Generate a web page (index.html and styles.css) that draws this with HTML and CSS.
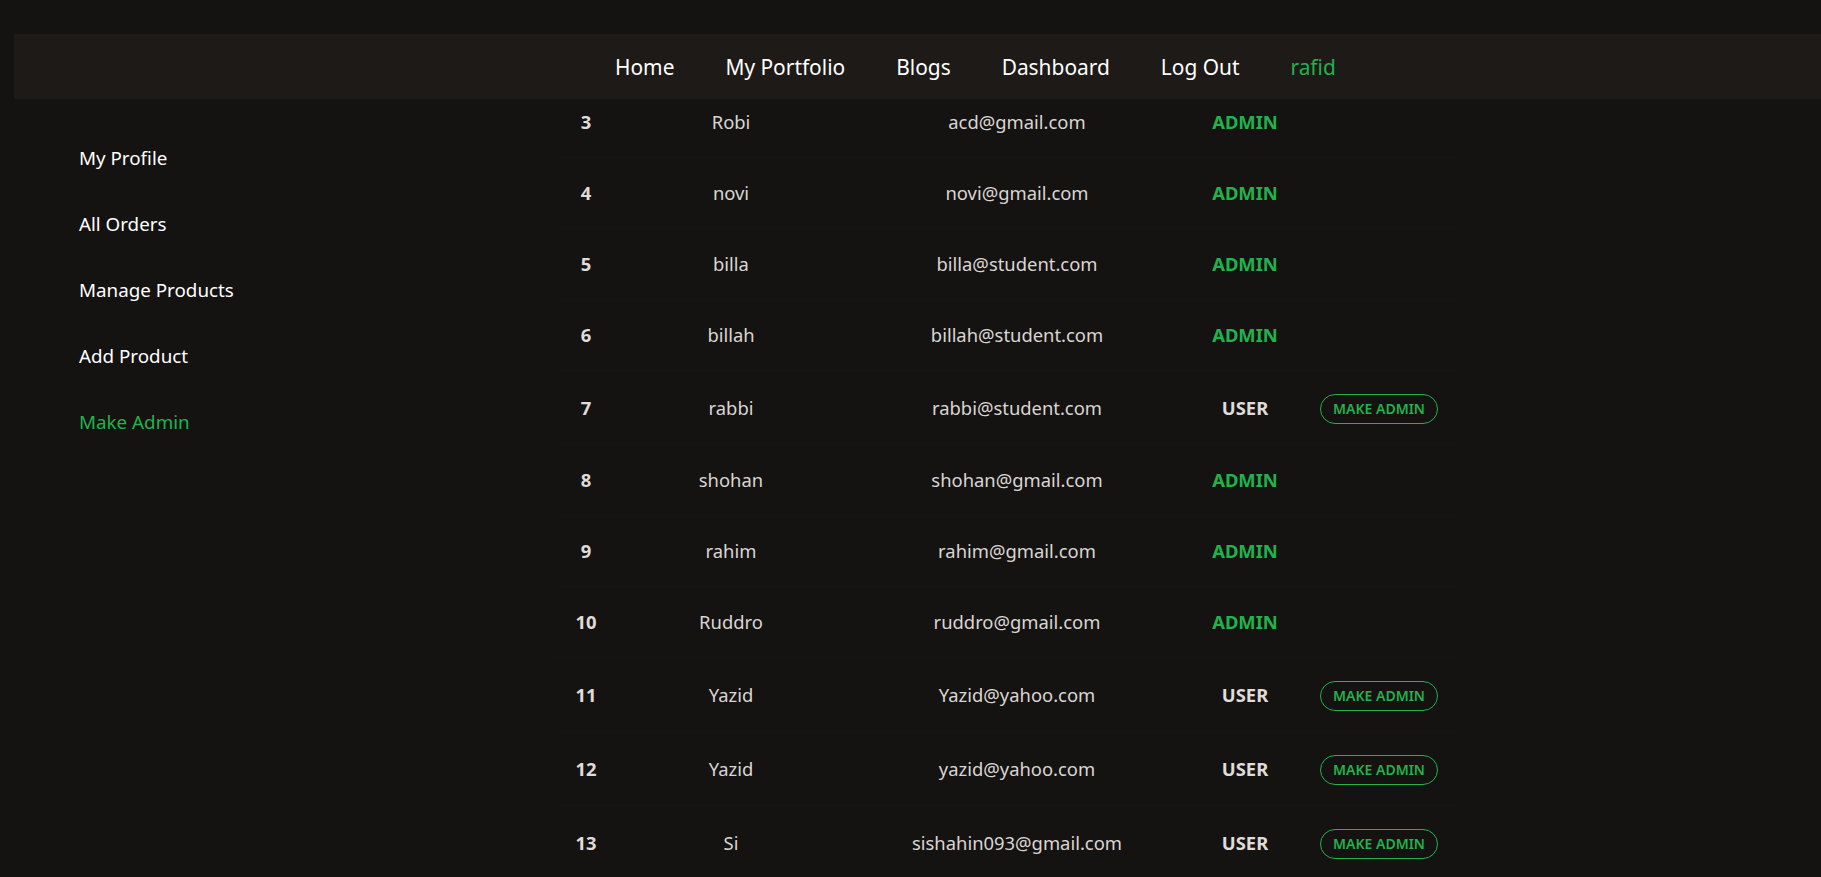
FILE: index.html
```html
<!DOCTYPE html>
<html lang="en">
<head>
<meta charset="utf-8">
<title>Make Admin</title>
<link rel="stylesheet" href="styles.css">
</head>
<body>
<header class="navbar">
  <nav class="nav-links">
    <a class="nav-link" href="#">Home</a>
    <a class="nav-link" href="#">My Portfolio</a>
    <a class="nav-link" href="#">Blogs</a>
    <a class="nav-link" href="#">Dashboard</a>
    <a class="nav-link" href="#">Log Out</a>
    <a class="nav-link nav-user" href="#">rafid</a>
  </nav>
</header>
<div class="layout">
  <aside class="sidebar">
    <a class="side-link" href="#">My Profile</a>
    <a class="side-link" href="#">All Orders</a>
    <a class="side-link" href="#">Manage Products</a>
    <a class="side-link" href="#">Add Product</a>
    <a class="side-link active" href="#">Make Admin</a>
  </aside>
  <main class="content">
    <table class="users">
      <colgroup>
        <col class="c-num"><col class="c-name"><col class="c-email"><col class="c-role"><col class="c-act">
      </colgroup>
      <tbody>
        <tr><th>3</th><td>Robi</td><td>acd@gmail.com</td><td class="role admin">ADMIN</td><td></td></tr>
        <tr><th>4</th><td>novi</td><td>novi@gmail.com</td><td class="role admin">ADMIN</td><td></td></tr>
        <tr><th>5</th><td>billa</td><td>billa@student.com</td><td class="role admin">ADMIN</td><td></td></tr>
        <tr><th>6</th><td>billah</td><td>billah@student.com</td><td class="role admin">ADMIN</td><td></td></tr>
        <tr class="has-btn"><th>7</th><td>rabbi</td><td>rabbi@student.com</td><td class="role">USER</td><td><button class="btn">MAKE ADMIN</button></td></tr>
        <tr><th>8</th><td>shohan</td><td>shohan@gmail.com</td><td class="role admin">ADMIN</td><td></td></tr>
        <tr><th>9</th><td>rahim</td><td>rahim@gmail.com</td><td class="role admin">ADMIN</td><td></td></tr>
        <tr><th>10</th><td>Ruddro</td><td>ruddro@gmail.com</td><td class="role admin">ADMIN</td><td></td></tr>
        <tr class="has-btn"><th>11</th><td>Yazid</td><td>Yazid@yahoo.com</td><td class="role">USER</td><td><button class="btn">MAKE ADMIN</button></td></tr>
        <tr class="has-btn"><th>12</th><td>Yazid</td><td>yazid@yahoo.com</td><td class="role">USER</td><td><button class="btn">MAKE ADMIN</button></td></tr>
        <tr class="has-btn"><th>13</th><td>Si</td><td>sishahin093@gmail.com</td><td class="role">USER</td><td><button class="btn">MAKE ADMIN</button></td></tr>
      </tbody>
    </table>
  </main>
</div>
</body>
</html>
```

FILE: styles.css
```css
* { box-sizing: border-box; }
html, body {
  margin: 0;
  padding: 0;
  background: #151212;
  height: 877px;
  overflow: hidden;
}
body {
  font-family: "Noto Sans", "Open Sans", sans-serif;
  color: #f2f2f2;
}
a { text-decoration: none; color: inherit; }

.navbar {
  position: fixed;
  top: 34px;
  left: 14px;
  right: 0;
  height: 65px;
  background: #1e1a17;
  z-index: 10;
  display: flex;
  align-items: center;
  padding-left: 601px;
}
.nav-links {
  display: flex;
  align-items: center;
  gap: 51px;
}
.nav-link {
  font-size: 20.9px;
  line-height: 30px;
  color: #ffffff;
}
.nav-user { color: #22b24c; }

.layout {
  display: flex;
  align-items: flex-start;
}
.sidebar {
  width: 555px;
  flex: none;
  padding: 125px 0 0 79px;
  display: flex;
  flex-direction: column;
}
.side-link {
  font-size: 18.8px;
  line-height: 30px;
  padding: 18px 0;
  color: #ffffff;
}
.side-link.active { color: #22b24c; }

.content {
  padding-top: 87px;
}
.users {
  width: 902px;
  border-collapse: collapse;
  table-layout: fixed;
  font-size: 18.4px;
  color: #dad6d3;
}
.c-num { width: 62px; }
.c-name { width: 228px; }
.c-email { width: 344px; }
.c-role { width: 112px; }
.c-act { width: 156px; }
.users tr { border-bottom: 1px solid #181414; }
.users th, .users td {
  padding: 20px 0;
  line-height: 30px;
  height: 70.3px;
  text-align: center;
  vertical-align: middle;
}
.users th { font-weight: 700; color: #e0dcd9; }
.users tr.has-btn th, .users tr.has-btn td { height: 74px; }
.role { font-weight: 700; color: #e0dcd9; }
.role.admin { color: #22b24c; }

.btn {
  height: 30px;
  width: 118px;
  padding: 0;
  border: 1.5px solid #22b24c;
  border-radius: 15px;
  background: transparent;
  color: #22b24c;
  font-family: inherit;
  font-size: 14px;
  font-weight: 600;
  line-height: 27px;
  vertical-align: middle;
}
```
